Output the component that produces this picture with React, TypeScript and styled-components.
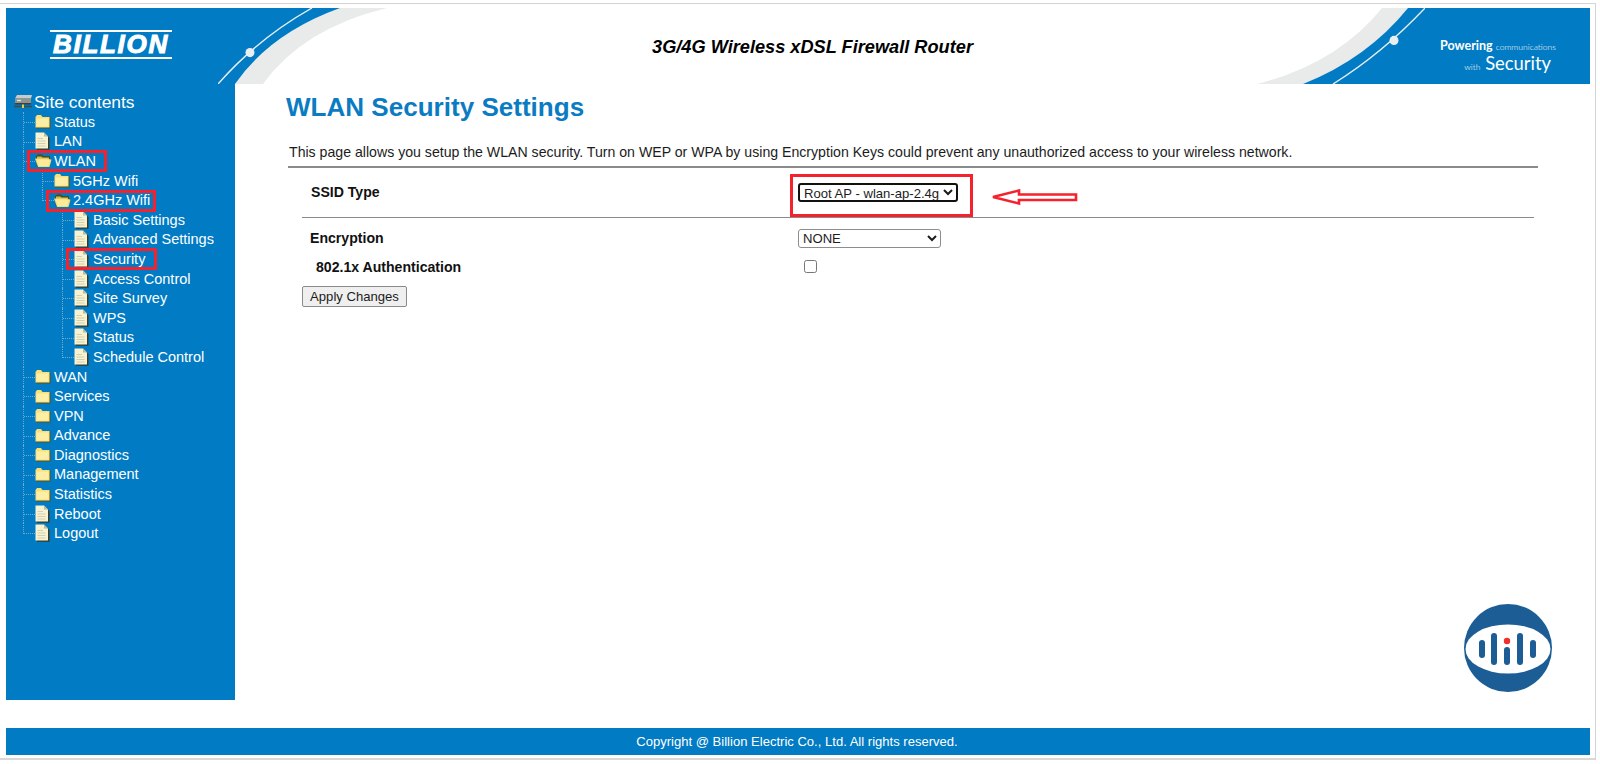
import React from "react";
import styled, { createGlobalStyle } from "styled-components";

const BLUE = "#017bc3";
const RED = "#f5222d";
const DOTS = "#74a8c8";

const GlobalStyle = createGlobalStyle`
    html,
    body {
        margin: 0;
        padding: 0;
        background: #fff;
        overflow: hidden;
    }
    body {
        font-family: "Liberation Sans", Arial, sans-serif;
        color: #1c1c1c;
    }
`;

/* icons */

const FolderIcon: React.FC = () => (
    <svg width="16" height="15" viewBox="0 0 16 15">
        <path d="M1 3.5 L2.5 1.5 H6.5 L8 3.5 H15.5 V14.5 H1 Z" fill="#5a5518" />
        <path d="M0.5 3 L2 1 H6 L7.5 3 H14.5 V13.5 H0.5 Z" fill="#f6e07c" />
        <path d="M1.5 4.5 H13.5 V12.5 H1.5 Z" fill="#fdeea6" />
    </svg>
);

const OpenFolderIcon: React.FC = () => (
    <svg width="17" height="15" viewBox="0 0 17 15">
        <path d="M1 3 L3 1.5 H7 L8.5 3 H15 V14 H2 Z" fill="#4e4a14" />
        <path d="M2 3.5 H6.5 L7.5 4.5 H14 V6 H2 Z" fill="#c9bb55" />
        <path d="M0 5.5 H12.5 L16.5 6.8 L14.5 14 H3 Z" fill="#f3dc74" />
        <path d="M1.6 6.5 H11.8 L15 7.5 L13.4 13 H3.8 Z" fill="#fdeb9a" />
    </svg>
);

const FileIcon: React.FC = () => (
    <svg width="15" height="18" viewBox="0 0 15 18">
        <path d="M3 1.5 H10 L14.5 6 V17.8 H2 V16 H3 Z" fill="#3a3a26" />
        <path d="M0.5 0.5 H9 L13 4.5 V16.5 H0.5 Z" fill="#f6f2d2" />
        <path d="M9 0.5 V4.5 H13 Z" fill="#bdbc9e" />
        <path d="M2.5 6.5 H8 M2.5 9 H10.5 M2.5 11.5 H10.5 M2.5 14 H10.5" stroke="#d2d0ae" strokeWidth="1" />
    </svg>
);

const ServerIcon: React.FC = () => (
    <svg width="19" height="18" viewBox="0 0 19 18">
        <path d="M3 2 H18 L17 5.5 H1 Z" fill="#c9ccc6" />
        <path d="M1 5.5 H17 V10 H1 Z" fill="#8f9390" />
        <path d="M1 10 H17 V11.5 H1 Z" fill="#3d3f38" />
        <path d="M3 7.5 H7" stroke="#e4e4d0" strokeWidth="1.4" />
        <path d="M0 13.5 H18" stroke="#4a4a30" strokeWidth="1.4" />
        <path d="M9 11.5 V15" stroke="#f0c94a" strokeWidth="2" />
    </svg>
);

const kinds = { folder: FolderIcon, open: OpenFolderIcon, file: FileIcon };

/* page frame */

const Frame = styled.div`
    box-sizing: border-box;
    width: 1596px;
    height: 757px;
    margin-top: 3px;
    padding: 4px 5px 4px 6px;
    border-top: 1px solid #d4d4d4;
    border-right: 1px solid #d4d4d4;
    border-bottom: 2px solid #d8d8d8;
    display: flex;
    flex-direction: column;
`;

/* header */

const Header = styled.header`
    display: flex;
    height: 76px;
    flex: none;
`;

const LogoBlock = styled.div`
    width: 212px;
    background: ${BLUE};
    display: flex;
    align-items: center;
    padding: 0 0 4px 44px;
    box-sizing: border-box;
`;

const Logo = styled.div`
    width: 122px;
    height: 25px;
    border-top: 2px solid #fff;
    border-bottom: 2px solid #fff;
    color: #fff;
    font-size: 26px;
    line-height: 25px;
    font-weight: 700;
    font-style: italic;
    letter-spacing: 1.7px;
    text-align: center;
    white-space: nowrap;
    -webkit-text-stroke: 1px #fff;
`;

const Swoosh = styled.svg`
    display: block;
    flex: none;
`;

const HeaderTitle = styled.div`
    flex: 1;
    text-align: center;
    padding: 5px 22px 0 0;
    line-height: 69px;
    font-size: 18.2px;
    font-weight: 700;
    font-style: italic;
    color: #000;
`;

const TaglineBlock = styled.div`
    width: 165px;
    background: ${BLUE};
    color: #fff;
    font-family: "Lato", "Liberation Sans", sans-serif;
    display: flex;
    flex-direction: column;
    align-items: flex-end;
    padding: 31px 34px 0 0;
    box-sizing: border-box;
`;

const TaglineTop = styled.div`
    font-size: 12.5px;
    line-height: 13px;
    font-weight: 700;
    white-space: nowrap;
`;

const TaglineSmall = styled.span`
    font-size: 8.6px;
    font-weight: 300;
    margin-left: 3px;
`;

const TaglineBottom = styled.div`
    font-size: 18.4px;
    line-height: 18px;
    font-weight: 400;
    white-space: nowrap;
    margin-right: 5px;
`;

/* body */

const Body = styled.div`
    display: flex;
    height: 616px;
    flex: none;
`;

const Sidebar = styled.nav`
    width: 229px;
    flex: none;
    background: ${BLUE};
    color: #fff;
    padding: 8px 0 0 8px;
    box-sizing: border-box;
    font-size: 14.5px;
`;

const RootRow = styled.div`
    display: flex;
    align-items: center;
    height: 20px;
    gap: 1px;
    font-size: 17.4px;
`;

const TreeList = styled.ul<{ $offset: number }>`
    list-style: none;
    margin: 0 0 0 ${({ $offset }) => $offset}px;
    padding: 0;
`;

const Connector = styled.span`
    flex: none;
    width: 11px;
    height: 10px;
    align-self: flex-start;
    border-bottom: 1px dotted ${DOTS};
`;

const TreeItem = styled.li`
    border-left: 1px dotted ${DOTS};

    &:last-child {
        border-left-color: transparent;
    }
    &:last-child > div > ${Connector} {
        margin-left: -1px;
        border-left: 1px dotted ${DOTS};
    }
`;

const TreeRow = styled.div`
    display: flex;
    align-items: center;
    height: 19.6px;
    white-space: nowrap;
`;

const IconSlot = styled.span`
    flex: none;
    width: 19px;
    height: 19px;
    display: flex;
    align-items: center;
`;

const Marked = styled.span<{ $left: number; $right: number }>`
    display: flex;
    align-items: center;
    position: relative;

    &::after {
        content: "";
        position: absolute;
        top: -1px;
        bottom: -2px;
        left: ${({ $left }) => -$left}px;
        right: ${({ $right }) => -$right}px;
        border: 3px solid ${RED};
    }
`;

interface TreeNode {
    label: string;
    kind: keyof typeof kinds;
    mark?: [number, number];
    children?: TreeNode[];
}

const tree: TreeNode[] = [
    { label: "Status", kind: "folder" },
    { label: "LAN", kind: "file" },
    {
        label: "WLAN",
        kind: "open",
        mark: [8, 11],
        children: [
            { label: "5GHz Wifi", kind: "folder" },
            {
                label: "2.4GHz Wifi",
                kind: "open",
                mark: [8, 6],
                children: [
                    { label: "Basic Settings", kind: "file" },
                    { label: "Advanced Settings", kind: "file" },
                    { label: "Security", kind: "file", mark: [8, 12] },
                    { label: "Access Control", kind: "file" },
                    { label: "Site Survey", kind: "file" },
                    { label: "WPS", kind: "file" },
                    { label: "Status", kind: "file" },
                    { label: "Schedule Control", kind: "file" },
                ],
            },
        ],
    },
    { label: "WAN", kind: "folder" },
    { label: "Services", kind: "folder" },
    { label: "VPN", kind: "folder" },
    { label: "Advance", kind: "folder" },
    { label: "Diagnostics", kind: "folder" },
    { label: "Management", kind: "folder" },
    { label: "Statistics", kind: "folder" },
    { label: "Reboot", kind: "file" },
    { label: "Logout", kind: "file" },
];

const levelOffsets = [9, 18, 19];

const Tree: React.FC<{ nodes: TreeNode[]; level?: number }> = ({ nodes, level = 0 }) => (
    <TreeList $offset={levelOffsets[level]}>
        {nodes.map((node) => {
            const Icon = kinds[node.kind];
            const content = (
                <>
                    <IconSlot>
                        <Icon />
                    </IconSlot>
                    <span>{node.label}</span>
                </>
            );
            return (
                <TreeItem key={node.label}>
                    <TreeRow>
                        <Connector />
                        {node.mark ? (
                            <Marked $left={node.mark[0]} $right={node.mark[1]}>
                                {content}
                            </Marked>
                        ) : (
                            content
                        )}
                    </TreeRow>
                    {node.children ? <Tree nodes={node.children} level={level + 1} /> : null}
                </TreeItem>
            );
        })}
    </TreeList>
);

/* main panel */

const Main = styled.main`
    flex: 1;
    display: flex;
    flex-direction: column;
    padding: 7px 53px 8px 51px;
    box-sizing: border-box;
`;

const PageTitle = styled.h1`
    margin: 0;
    font-size: 26.05px;
    line-height: 32px;
    font-weight: 700;
    color: #0b7cc2;
`;

const Intro = styled.p`
    margin: 21px 0 0 3px;
    font-size: 14.14px;
    line-height: 16px;
    white-space: nowrap;
`;

const Rule = styled.hr<{ $thick?: boolean }>`
    margin: ${({ $thick }) => ($thick ? "6px -1px 0 2px" : "0 3px 0 16px")};
    border: none;
    height: ${({ $thick }) => ($thick ? "2px" : "1px")};
    background: #8b8b8b;
`;

const FormRow = styled.div<{ $height: number }>`
    display: grid;
    grid-template-columns: 496px 1fr;
    align-items: center;
    height: ${({ $height }) => $height}px;
    margin-left: 16px;
`;

const FieldLabel = styled.label<{ $indent: number }>`
    padding: 0 0 2px ${({ $indent }) => $indent}px;
    font-size: 14.1px;
    font-weight: 700;
    color: #111;
`;

const FieldControl = styled.div`
    display: flex;
    align-items: center;
`;

const Select = styled.select<{ $width: number; $focused?: boolean }>`
    display: block;
    width: ${({ $width }) => $width}px;
    height: 19px;
    padding: 0;
    font-family: "Liberation Sans", Arial, sans-serif;
    font-size: 13.1px;
    color: #1c1c1c;
    background: #fff;
    border-radius: 3px;
    border: ${({ $focused }) => ($focused ? "2px solid #111" : "1px solid #8d8d8d")};
`;

const AnnotatedBox = styled.div`
    position: relative;

    &::after {
        content: "";
        position: absolute;
        top: -9px;
        bottom: -15px;
        left: -8px;
        right: -15px;
        border: 3px solid ${RED};
        pointer-events: none;
    }
`;

const ArrowMark = styled.svg`
    display: block;
    margin: 9px 0 0 33px;
`;

const Checkbox = styled.input`
    width: 13px;
    height: 13px;
    margin: 0 0 4px 6px;
`;

const ApplyButton = styled.button`
    align-self: flex-start;
    width: 105px;
    height: 21px;
    margin: 10px 0 0 16px;
    padding: 0;
    font-family: "Liberation Sans", Arial, sans-serif;
    font-size: 13.1px;
    color: #1c1c1c;
    background: #efefef;
    border: 1px solid #8a8a8a;
    border-radius: 2px;
`;

const BrandMark = styled.svg`
    display: block;
    margin: auto -15px 0 auto;
`;

const Footer = styled.footer`
    height: 27px;
    flex: none;
    margin-top: 28px;
    background: ${BLUE};
    color: #fff;
    font-size: 13.05px;
    line-height: 28px;
    text-align: center;
    padding-right: 2px;
`;

const App: React.FC = () => (
    <>
        <GlobalStyle />
        <Frame>
            <Header>
                <LogoBlock>
                    <Logo>BILLION</Logo>
                </LogoBlock>
                <Swoosh width="172" height="76" viewBox="0 0 172 75" preserveAspectRatio="none">
                    <path d="M122 0 H169 Q85 20 45 75 H17 Q52 25 122 0 Z" fill="#e9ebeb" />
                    <path d="M0 0 H122 Q52 25 17 75 H0 Z" fill={BLUE} />
                    <path d="M0 75 Q40 30 94 0" fill="none" stroke="#e8eef2" strokeWidth="1.4" />
                    <circle cx="32" cy="44" r="4.5" fill="#e8eef2" />
                </Swoosh>
                <HeaderTitle>3G/4G Wireless xDSL Firewall Router</HeaderTitle>
                <Swoosh width="168" height="76" viewBox="0 0 168 75" preserveAspectRatio="none">
                    <path d="M0 75 Q80 55 125 0 H151 Q110 50 46 75 Z" fill="#e9ebeb" />
                    <path d="M46 75 Q110 50 151 0 H168 V75 Z" fill={BLUE} />
                    <path d="M76 75 Q125 45 168 0" fill="none" stroke="#e8eef2" strokeWidth="1.4" />
                    <circle cx="137" cy="32" r="4.5" fill="#e8eef2" />
                </Swoosh>
                <TaglineBlock>
                    <TaglineTop>
                        Powering<TaglineSmall>communications</TaglineSmall>
                    </TaglineTop>
                    <TaglineBottom>
                        <TaglineSmall>with</TaglineSmall> Security
                    </TaglineBottom>
                </TaglineBlock>
            </Header>
            <Body>
                <Sidebar>
                    <RootRow>
                        <ServerIcon />
                        <span>Site contents</span>
                    </RootRow>
                    <Tree nodes={tree} />
                </Sidebar>
                <Main>
                    <PageTitle>WLAN Security Settings</PageTitle>
                    <Intro>
                        This page allows you setup the WLAN security. Turn on WEP or WPA by using Encryption Keys could
                        prevent any unauthorized access to your wireless network.
                    </Intro>
                    <Rule $thick />
                    <FormRow $height={49}>
                        <FieldLabel $indent={9}>SSID Type</FieldLabel>
                        <FieldControl>
                            <AnnotatedBox>
                                <Select $width={160} $focused defaultValue="root">
                                    <option value="root">Root AP - wlan-ap-2.4g</option>
                                </Select>
                            </AnnotatedBox>
                            <ArrowMark width="87" height="16" viewBox="0 0 87 16">
                                <path
                                    d="M2 8 L28 1.5 V5.5 H85 V11 H28 V14.5 Z"
                                    fill="#fff"
                                    stroke={RED}
                                    strokeWidth="2.6"
                                />
                            </ArrowMark>
                        </FieldControl>
                    </FormRow>
                    <Rule />
                    <FormRow $height={41}>
                        <FieldLabel $indent={8}>Encryption</FieldLabel>
                        <FieldControl>
                            <Select $width={143} defaultValue="none">
                                <option value="none">NONE</option>
                            </Select>
                        </FieldControl>
                    </FormRow>
                    <FormRow $height={17}>
                        <FieldLabel $indent={14}>802.1x Authentication</FieldLabel>
                        <FieldControl>
                            <Checkbox type="checkbox" />
                        </FieldControl>
                    </FormRow>
                    <ApplyButton type="button">Apply Changes</ApplyButton>
                    <BrandMark width="88" height="88" viewBox="0 0 88 88">
                        <circle cx="44" cy="44" r="44" fill="#1c5d96" />
                        <ellipse cx="44" cy="45" rx="42.5" ry="24.5" fill="#fff" />
                        <g fill="#1c5d96">
                            <rect x="15" y="36" width="6" height="18" rx="3" />
                            <rect x="27" y="29" width="6" height="32" rx="3" />
                            <rect x="40" y="43" width="6" height="18" rx="3" />
                            <rect x="53" y="29" width="6" height="32" rx="3" />
                            <rect x="66" y="36" width="6" height="18" rx="3" />
                        </g>
                        <circle cx="43" cy="37" r="3.2" fill="#f0302c" />
                    </BrandMark>
                </Main>
            </Body>
            <Footer>Copyright @ Billion Electric Co., Ltd. All rights reserved.</Footer>
        </Frame>
    </>
);

export default App;
